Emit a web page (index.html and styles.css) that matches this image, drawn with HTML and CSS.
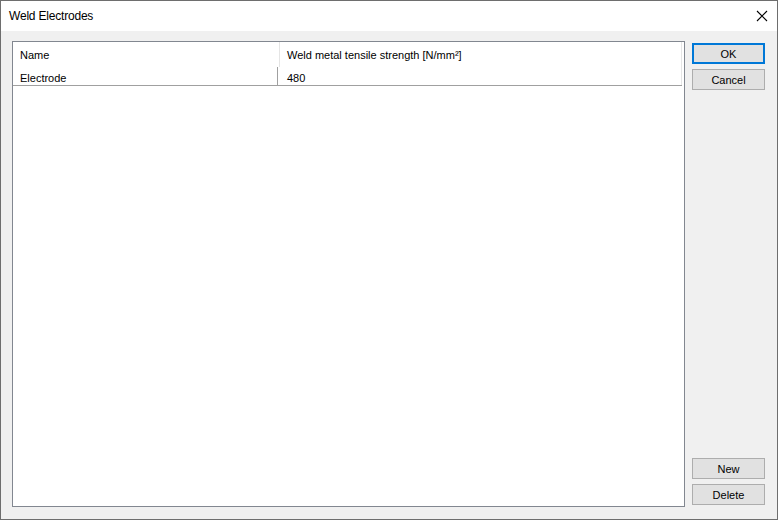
FILE: index.html
```html
<!DOCTYPE html>
<html>
<head>
<meta charset="utf-8">
<link rel="stylesheet" href="styles.css">
</head>
<body>
<div class="window">
  <div class="titlebar">
    <span class="title">Weld Electrodes</span>
    <svg class="close" width="12" height="12" viewBox="0 0 12 12"><path d="M1 1 L11 11 M11 1 L1 11" stroke="#000" stroke-width="1.1" fill="none"/></svg>
  </div>
  <div class="content">
    <div class="listbox">
      <div class="table">
        <div class="row header">
          <div class="cell c1">Name</div>
          <div class="cell c2">Weld metal tensile strength [N/mm²]</div>
        </div>
        <div class="row data">
          <div class="cell c1">Electrode</div>
          <div class="cell c2">480</div>
        </div>
      </div>
    </div>
    <div class="buttons">
      <div class="group">
        <button class="btn default">OK</button>
        <button class="btn">Cancel</button>
      </div>
      <div class="group">
        <button class="btn">New</button>
        <button class="btn">Delete</button>
      </div>
    </div>
  </div>
</div>
</body>
</html>
```
FILE: styles.css
```css
html, body { margin: 0; padding: 0; }
body { font-family: "Liberation Sans", Arial, sans-serif; font-size: 11px; color: #000; }
.window {
  width: 778px; height: 520px; box-sizing: border-box;
  border: 1px solid #6e6e6e; background: #f0f0f0;
  display: flex; flex-direction: column;
}
.titlebar {
  height: 30px; background: #fff; display: flex; align-items: center;
  justify-content: space-between; padding: 0 9px 0 8px; flex: none;
}
.title { font-size: 12px; letter-spacing: -0.2px; }
.content {
  flex: 1; display: flex; padding: 10px 12px 12px 11px; gap: 7px; min-height: 0;
}
.listbox {
  width: 673px; box-sizing: border-box; border: 1px solid #828790; background: #fff;
  height: 466px; padding-right: 2px;
}
.table { display: flex; flex-direction: column; }
.row { display: flex; }
.row.header { height: 25px; }
.row.header .c1 { width: 267px; border-right: 1px solid #e5e5e5; }
.row.header .c2 { flex: 1; border-right: 1px solid #e5e5e5; }
.row.header .cell { height: 25px; line-height: 23px; padding-top: 2px; }
.row.data { height: 18px; border-bottom: 1px solid #a0a0a0; }
.row.data .cell { height: 18px; line-height: 16px; padding-top: 3px; }
.row.data .c1 { width: 265px; border-right: 1px solid #a0a0a0; }
.row.data .c2 { flex: 1; border-right: 1px solid #e5e5e5; padding-left: 9px; }
.cell { padding-left: 7px; box-sizing: border-box; white-space: nowrap; }
.buttons { display: flex; flex-direction: column; justify-content: space-between; width: 73px; padding: 2px 0 2px; }
.group { display: flex; flex-direction: column; gap: 5px; }
.btn {
  width: 73px; height: 21px; box-sizing: border-box; margin: 0; padding: 0;
  background: #e1e1e1; border: 1px solid #adadad; font-family: inherit; font-size: 11px; color: #000;
}
.btn.default { border: 2px solid #0078d7; }
```
